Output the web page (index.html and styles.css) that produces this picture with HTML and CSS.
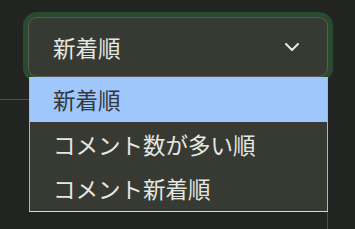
FILE: index.html
```html
<!DOCTYPE html>
<html lang="ja">
<head>
    <meta charset="UTF-8">
    <meta name="viewport" content="width=device-width, initial-scale=1.0">
    <title>並び替え</title>
    <link rel="stylesheet" href="styles.css">
</head>
<body>
    <div class="sort">
        <!-- Select box (focused) -->
        <div class="sort-select">
            <span class="sort-label">新着順</span>
            <svg class="chevron" width="14" height="8" viewBox="0 0 14 8">
                <path d="M1 1 L7 7 L13 1" fill="none" stroke="#e8e8e4" stroke-width="2" stroke-linecap="round" stroke-linejoin="round"/>
            </svg>
        </div>

        <!-- Open option list -->
        <ul class="sort-menu">
            <li class="sort-option selected">新着順</li>
            <li class="sort-option">コメント数が多い順</li>
            <li class="sort-option">コメント新着順</li>
        </ul>
    </div>

    <div class="comments"></div>
</body>
</html>
```

FILE: styles.css
```css
body {
    margin: 0;
    padding: 0;
    background-color: #212421;
    font-family: "Noto Sans CJK JP", "Noto Sans", sans-serif;
    color: #e6e7e2;
    overflow: hidden;
}
.sort {
    position: relative;
    padding: 17px 0 0 28px;
    width: 300px;
}
.sort-select {
    display: flex;
    align-items: center;
    justify-content: space-between;
    box-sizing: border-box;
    height: 60px;
    padding: 0 28px 0 24px;
    background-color: #363a33;
    border: 1px solid #575c54;
    border-radius: 9px;
    box-shadow: 0 0 0 5px #284a2e;
}
.sort-label {
    font-size: 22.5px;
    line-height: 1;
}
.chevron {
    display: block;
}
.sort-menu {
    position: absolute;
    top: 77px;
    left: 29px;
    width: 299px;
    box-sizing: border-box;
    margin: 0;
    padding: 0;
    list-style: none;
    background-color: #363a33;
    border: 1px solid #b4b7b1;
    border-top: none;
    border-bottom-color: #d8dad6;
}
.sort-option {
    height: 44.67px;
    line-height: 44.67px;
    padding-left: 23px;
    font-size: 22.5px;
    color: #e6e7e2;
}
.sort-option.selected {
    background-color: #9fc7fb;
    color: #34383a;
}
.comments {
    margin-top: 22px;
    width: 328px;
    height: 130px;
    box-sizing: border-box;
    border-top: 1px solid #4c504a;
    border-right: 1px solid #4c504a;
}
```
